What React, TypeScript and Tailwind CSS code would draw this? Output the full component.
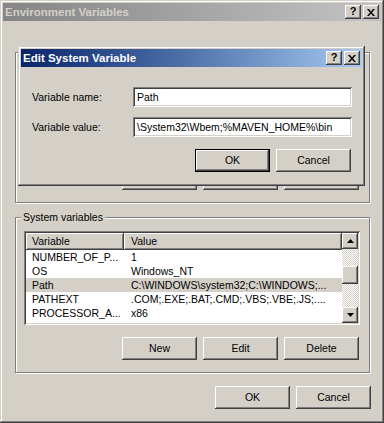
import React from "react";

const raised =
  "bg-[#d4d0c8] shadow-[inset_-1px_-1px_#404040,inset_1px_1px_#fff,inset_-2px_-2px_#808080,inset_2px_2px_#d4d0c8]";
const sunken =
  "shadow-[inset_1px_1px_#808080,inset_-1px_-1px_#fff,inset_2px_2px_#404040,inset_-2px_-2px_#d4d0c8]";
const frame =
  "shadow-[inset_-1px_-1px_#404040,inset_1px_1px_#d4d0c8,inset_-2px_-2px_#808080,inset_2px_2px_#fff]";

function CloseGlyph() {
  return (
    <svg width="8" height="7" viewBox="0 0 8 7">
      <path d="M0 0h2l2 2.5L6 0h2L5 3.5L8 7H6L4 4.5L2 7H0l3-3.5z" fill="#000" />
    </svg>
  );
}

function TitleButtons() {
  return (
    <div className="flex items-center gap-[2px] mr-[2px]">
      <div className={`w-[16px] h-[14px] flex items-center justify-center ${raised}`}>
        <span className="font-bold text-[11px] leading-none text-black pb-[1px]">?</span>
      </div>
      <div className={`w-[16px] h-[14px] flex items-center justify-center ${raised}`}>
        <CloseGlyph />
      </div>
    </div>
  );
}

function Button({ label, def }: { label: string; def?: boolean }) {
  return (
    <div
      className={`w-[75px] h-[23px] flex items-center justify-center text-black ${
        def ? "border border-black " : ""
      }${raised}`}
    >
      {label}
    </div>
  );
}

function Arrow({ up }: { up?: boolean }) {
  return (
    <div className={`w-[16px] h-[16px] flex items-center justify-center ${raised}`}>
      <svg width="7" height="4" viewBox="0 0 7 4">
        {up ? (
          <path d="M3.5 0L7 4H0z" fill="#000" />
        ) : (
          <path d="M0 0h7L3.5 4z" fill="#000" />
        )}
      </svg>
    </div>
  );
}

const rows: [string, string][] = [
  ["NUMBER_OF_P...", "1"],
  ["OS", "Windows_NT"],
  ["Path", "C:\\WINDOWS\\system32;C:\\WINDOWS;..."],
  ["PATHEXT", ".COM;.EXE;.BAT;.CMD;.VBS;.VBE;.JS;...."],
  ["PROCESSOR_A...", "x86"],
];

export default function App() {
  return (
    <div
      className={`relative w-[384px] h-[423px] bg-[#d4d0c8] p-[3px] flex flex-col font-['Liberation_Sans',Arial,sans-serif] text-[10.5px] leading-[13px] text-black overflow-hidden ${frame}`}
    >
      {/* Outer title bar (inactive) */}
      <div className="h-[18px] flex items-center justify-between bg-gradient-to-r from-[#858585] to-[#c4c4c4]">
        <span className="pl-[2px] font-bold text-[11.5px] text-[#d4d0c8]">Environment Variables</span>
        <TitleButtons />
      </div>

      <div className="flex flex-col pl-[12px] pr-[11px]">
        {/* User variables group (mostly hidden) */}
        <fieldset className="mt-[25px] border border-[#808080] shadow-[1px_1px_0_#fff,inset_1px_1px_0_#fff]">
          <legend className="ml-[5px] px-[2px] bg-[#d4d0c8] leading-[13px]">
            User variables for Administrator
          </legend>
          <div className="h-[108px]" />
          <div className="flex justify-end gap-[6px] pr-[10px] pb-[12px]">
            <Button label="New" />
            <Button label="Edit" />
            <Button label="Delete" />
          </div>
        </fieldset>

        {/* System variables group */}
        <fieldset className="mt-[8px] border border-[#808080] shadow-[1px_1px_0_#fff,inset_1px_1px_0_#fff]">
          <legend className="ml-[5px] px-[2px] bg-[#d4d0c8] leading-[13px]">System variables</legend>
          <div className="pl-[8px] pt-[7px]">
            <div className={`w-[336px] h-[94px] bg-white p-[2px] flex ${sunken}`}>
              <div className="flex-1 flex flex-col overflow-hidden">
                <div className="h-[17px] flex">
                  <div className="w-[98px] flex items-center pl-[6px] bg-[#d4d0c8] shadow-[inset_-1px_-1px_#404040,inset_1px_1px_#fff,inset_-2px_-2px_#808080]">
                    Variable
                  </div>
                  <div className="flex-1 flex items-center pl-[7px] bg-[#d4d0c8] shadow-[inset_-1px_-1px_#404040,inset_1px_1px_#fff,inset_-2px_-2px_#808080]">
                    Value
                  </div>
                </div>
                {rows.map(([k, v]) => (
                  <div
                    key={k}
                    className={`h-[14px] flex items-center whitespace-nowrap ${
                      k === "Path" ? "bg-[#d4d0c8]" : ""
                    }`}
                  >
                    <div className="w-[98px] pl-[6px]">{k}</div>
                    <div className="flex-1 pl-[7px]">{v}</div>
                  </div>
                ))}
              </div>
              <div className="w-[16px] flex flex-col">
                <Arrow up />
                <div className="flex-1 flex flex-col bg-[repeating-conic-gradient(#d4d0c8_0_25%,#fff_0_50%)] bg-[length:2px_2px]">
                  <div className="h-[17px]" />
                  <div className={`h-[18px] ${raised}`} />
                </div>
                <Arrow />
              </div>
            </div>
          </div>
          <div className="flex justify-end gap-[6px] pr-[10px] pt-[12px] pb-[12px]">
            <Button label="New" />
            <Button label="Edit" />
            <Button label="Delete" />
          </div>
        </fieldset>
      </div>

      <div className="flex justify-end gap-[6px] pr-[10px] mt-[13px]">
        <Button label="OK" />
        <Button label="Cancel" />
      </div>

      {/* Edit System Variable dialog overlay */}
      <div
        className={`absolute left-[18px] top-[46px] w-[347px] bg-[#d4d0c8] p-[3px] flex flex-col ${frame}`}
      >
        <div className="h-[18px] flex items-center justify-between bg-gradient-to-r from-[#0a246a] to-[#a6caf0]">
          <span className="pl-[2px] font-bold text-[11.5px] text-white">Edit System Variable</span>
          <TitleButtons />
        </div>
        <div className="flex flex-col pl-[11px] pr-[10px] pt-[20px] pb-[11px]">
          <div className="flex items-center">
            <span className="w-[101px]">Variable name:</span>
            <div className={`w-[219px] h-[20px] bg-white flex items-center pl-[4px] ${sunken}`}>Path</div>
          </div>
          <div className="flex items-center mt-[10px]">
            <span className="w-[101px]">Variable value:</span>
            <div className={`w-[219px] h-[20px] bg-white flex items-center pl-[4px] whitespace-nowrap overflow-hidden ${sunken}`}>
              \System32\Wbem;%MAVEN_HOME%\bin
            </div>
          </div>
          <div className="flex justify-end gap-[6px] mt-[12px] pr-[1px]">
            <Button label="OK" def />
            <Button label="Cancel" />
          </div>
        </div>
      </div>
    </div>
  );
}
